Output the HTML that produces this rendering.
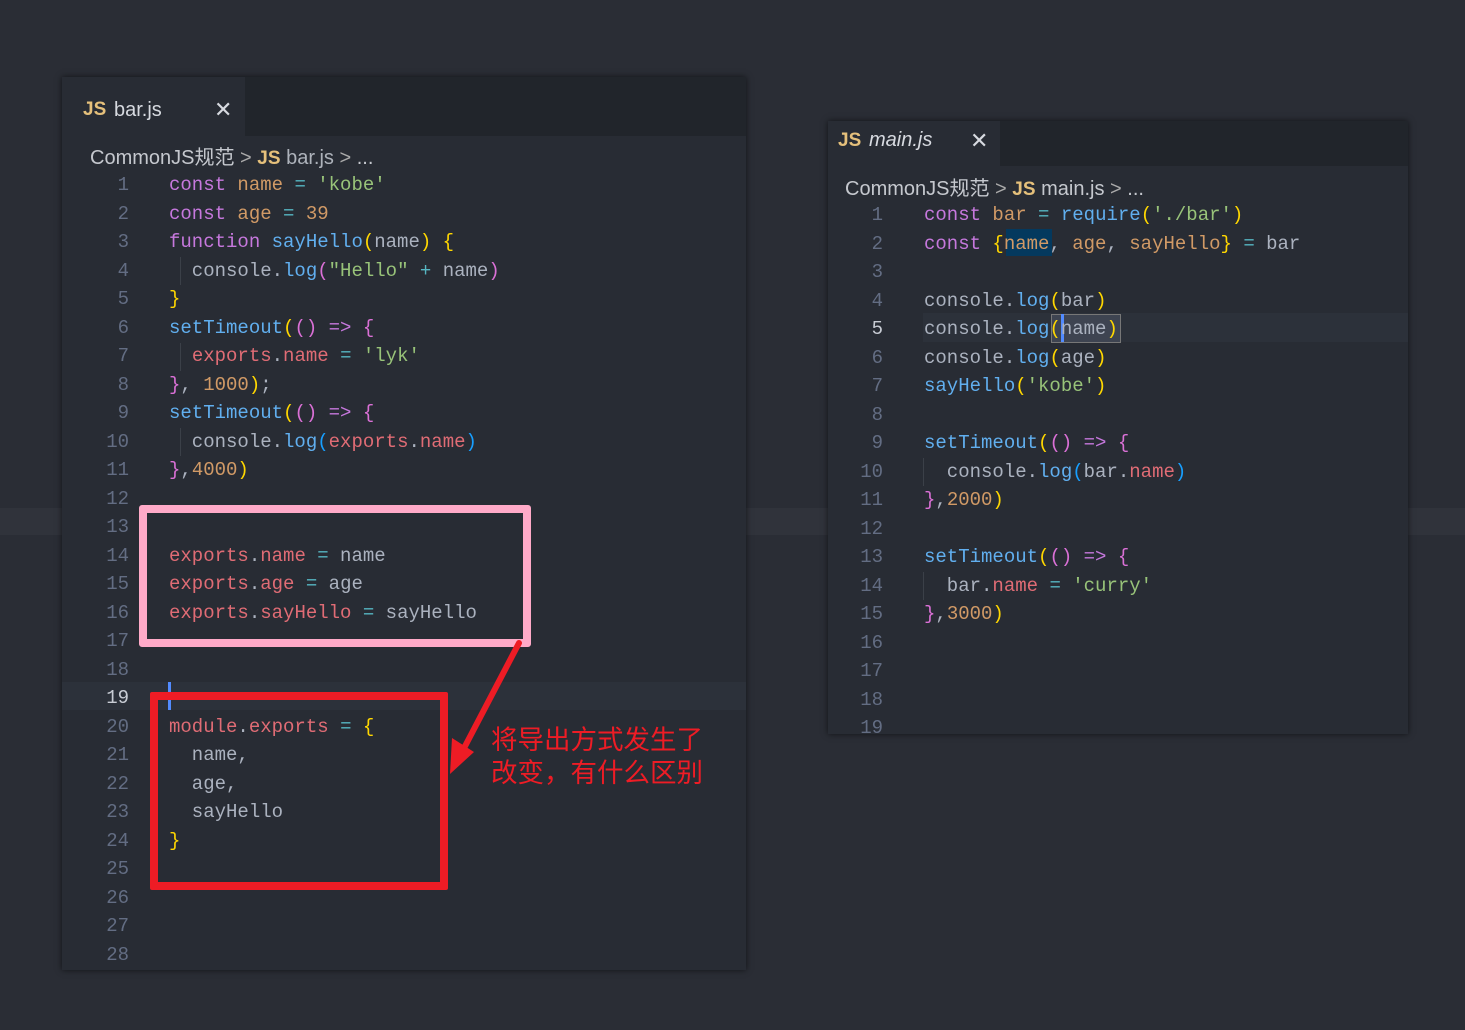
<!DOCTYPE html>
<html><head><meta charset="utf-8"><style>
body{margin:0;width:1465px;height:1030px;background:#2a2d35;position:relative;overflow:hidden;font-family:"Liberation Sans","Noto Sans CJK SC",sans-serif}
.band{position:absolute;left:0;top:508px;width:1465px;height:27px;background:#30333b}
.panel{position:absolute;background:#282c34;box-shadow:0 0 6px rgba(0,0,0,.6)}
.tabbar{position:absolute;left:0;top:0;right:0;background:#21252b}
.tab{position:absolute;left:0;top:0;background:#282c34;color:#d7dae0;font-size:20px}
.js{color:#e5c07b;font-weight:bold;font-size:19px}
.x{position:absolute;font-size:22px;color:#d7dae0}
.crumb{position:absolute;color:#c5c8ce;font-size:20px;white-space:nowrap}
.code{position:absolute;font-family:"Liberation Mono",monospace;font-size:19px;line-height:28.5px;white-space:pre;color:#abb2bf;margin:0}
.ln{position:absolute;font-family:"Liberation Mono",monospace;font-size:19px;line-height:28.5px;color:#636d83;text-align:right;white-space:pre;margin:0}
.k{color:#c678dd}.v{color:#d19a66}.o{color:#56b6c2}.s{color:#98c379}.f{color:#61afef}.r{color:#e06c75}.y{color:#ffd700}.m{color:#da70d6}.b{color:#179fff}
.guide{position:absolute;width:1px;background:#3b4048}
</style></head><body>
<div class="band"></div>

<!-- left panel -->
<div class="panel" style="left:62px;top:77px;width:684px;height:893px">
  <div class="tabbar" style="height:59px"></div>
  <div class="tab" style="width:183px;height:59px"><span class="js" style="position:absolute;left:21px;top:22px">JS</span><span style="position:absolute;left:52px;top:22px">bar.js</span><span class="x" style="left:152px;top:20px">✕</span></div>
  <div class="crumb" style="left:28px;top:64px">CommonJS规范 <span style="color:#aaa">&gt;</span> <span class="js">JS</span> <span style="color:#aeb3bb">bar.js</span> <span style="color:#aaa">&gt;</span> ...</div>
  <div style="position:absolute;left:0;top:605px;width:684px;height:28px;background:#2c313a"></div>
  <div style="position:absolute;left:106px;top:605px;width:3px;height:28px;background:#528bff"></div>
  <div class="guide" style="left:118px;top:180px;height:28px"></div>
  <div class="guide" style="left:118px;top:266px;height:28px"></div>
  <div class="guide" style="left:118px;top:351px;height:28px"></div>
<pre class="ln" style="left:20px;top:94px;width:47px">1
2
3
4
5
6
7
8
9
10
11
12
13
14
15
16
17
18
<span style="color:#c8ccd4">19</span>
20
21
22
23
24
25
26
27
28</pre>
<pre class="code" style="left:107px;top:94px"><span class="k">const</span> <span class="v">name</span> <span class="o">=</span> <span class="s">'kobe'</span>
<span class="k">const</span> <span class="v">age</span> <span class="o">=</span> <span class="v">39</span>
<span class="k">function</span> <span class="f">sayHello</span><span class="y">(</span>name<span class="y">)</span> <span class="y">{</span>
  console.<span class="f">log</span><span class="m">(</span><span class="s">"Hello"</span> <span class="o">+</span> name<span class="m">)</span>
<span class="y">}</span>
<span class="f">setTimeout</span><span class="y">(</span><span class="m">()</span> <span class="k">=&gt;</span> <span class="m">{</span>
  <span class="r">exports</span>.<span class="r">name</span> <span class="o">=</span> <span class="s">'lyk'</span>
<span class="m">}</span>, <span class="v">1000</span><span class="y">)</span>;
<span class="f">setTimeout</span><span class="y">(</span><span class="m">()</span> <span class="k">=&gt;</span> <span class="m">{</span>
  console.<span class="f">log</span><span class="b">(</span><span class="r">exports</span>.<span class="r">name</span><span class="b">)</span>
<span class="m">}</span>,<span class="v">4000</span><span class="y">)</span>


<span class="r">exports</span>.<span class="r">name</span> <span class="o">=</span> name
<span class="r">exports</span>.<span class="r">age</span> <span class="o">=</span> age
<span class="r">exports</span>.<span class="r">sayHello</span> <span class="o">=</span> sayHello



<span class="r">module</span>.<span class="r">exports</span> <span class="o">=</span> <span class="y">{</span>
  name,
  age,
  sayHello
<span class="y">}</span></pre>
</div>

<!-- right panel -->
<div class="panel" style="left:828px;top:121px;width:580px;height:613px;overflow:hidden">
  <div class="tabbar" style="height:45px"></div>
  <div class="tab" style="width:172px;height:45px"><span class="js" style="position:absolute;left:10px;top:9px">JS</span><span style="position:absolute;left:41px;top:8px;font-style:italic">main.js</span><span class="x" style="left:142px;top:7px">✕</span></div>
  <div class="crumb" style="left:17px;top:51px">CommonJS规范 <span style="color:#aaa">&gt;</span> <span class="js">JS</span> <span style="color:#c5c8ce">main.js</span> <span style="color:#aaa">&gt;</span> ...</div>
  <div style="position:absolute;left:95px;top:192px;width:485px;height:29px;background:#2c313a"></div>
  <div style="position:absolute;left:178px;top:108px;width:46px;height:27px;background:#04395e"></div>
  <div style="position:absolute;left:223px;top:193px;width:68px;height:27px;background:#3e4451;border:1px solid #777"></div>
  <div style="position:absolute;left:233px;top:193px;width:3px;height:28px;background:#528bff"></div>
  <div class="guide" style="left:95px;top:337px;height:28px"></div>
  <div class="guide" style="left:95px;top:451px;height:28px"></div>
<pre class="ln" style="left:8px;top:80px;width:47px">1
2
3
4
<span style="color:#c8ccd4">5</span>
6
7
8
9
10
11
12
13
14
15
16
17
18
19</pre>
<pre class="code" style="left:96px;top:80px"><span class="k">const</span> <span class="v">bar</span> <span class="o">=</span> <span class="f">require</span><span class="y">(</span><span class="s">'./bar'</span><span class="y">)</span>
<span class="k">const</span> <span class="y">{</span><span class="v">name</span>, <span class="v">age</span>, <span class="v">sayHello</span><span class="y">}</span> <span class="o">=</span> bar

console.<span class="f">log</span><span class="y">(</span>bar<span class="y">)</span>
console.<span class="f">log</span><span class="y">(</span>name<span class="y">)</span>
console.<span class="f">log</span><span class="y">(</span>age<span class="y">)</span>
<span class="f">sayHello</span><span class="y">(</span><span class="s">'kobe'</span><span class="y">)</span>

<span class="f">setTimeout</span><span class="y">(</span><span class="m">()</span> <span class="k">=&gt;</span> <span class="m">{</span>
  console.<span class="f">log</span><span class="b">(</span>bar.<span class="r">name</span><span class="b">)</span>
<span class="m">}</span>,<span class="v">2000</span><span class="y">)</span>

<span class="f">setTimeout</span><span class="y">(</span><span class="m">()</span> <span class="k">=&gt;</span> <span class="m">{</span>
  bar.<span class="r">name</span> <span class="o">=</span> <span class="s">'curry'</span>
<span class="m">}</span>,<span class="v">3000</span><span class="y">)</span></pre>
</div>

<!-- annotations -->
<div style="position:absolute;left:139px;top:505px;width:376px;height:126px;border:8px solid #ffaac8;border-radius:3px"></div>
<div style="position:absolute;left:150px;top:692px;width:282px;height:182px;border:8px solid #ee1c25;border-radius:2px"></div>
<svg style="position:absolute;left:0;top:0" width="1465" height="1030">
  <line x1="519" y1="643" x2="462" y2="752" stroke="#ee1c25" stroke-width="6" stroke-linecap="round"/>
  <polygon points="450,774 452,738 474,752" fill="#ee1c25"/>
</svg>
<div style="position:absolute;left:491px;top:721px;color:#ee1c25;font-size:26.5px;line-height:33px;font-family:'Noto Sans CJK SC',sans-serif">将导出方式发生了<br>改变，有什么区别</div>
</body></html>
